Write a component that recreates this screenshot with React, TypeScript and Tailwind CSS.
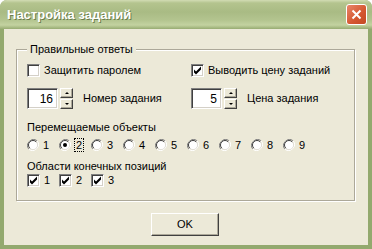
import React from "react";

const font = { fontFamily: '"Liberation Sans", Arial, sans-serif' };

function CheckBox({ checked }: { checked?: boolean }) {
  return (
    <span className="relative inline-block w-[13px] h-[13px] bg-white border border-t-[#808080] border-l-[#808080] border-b-white border-r-white shadow-[inset_1px_1px_0_#404040,inset_-1px_-1px_0_#d4d0c8] shrink-0">
      {checked && (
        <svg viewBox="0 0 11 11" className="absolute inset-0 w-[11px] h-[11px]">
          <path d="M2 4.5 L4 6.5 L9 1.5 L9 4.5 L4 9.5 L2 7.5 Z" fill="#000" />
        </svg>
      )}
    </span>
  );
}

function Radio({ checked }: { checked?: boolean }) {
  return (
    <svg viewBox="0 0 12 12" className="w-[12px] h-[12px] shrink-0">
      <path d="M10.2 1.8 A6 6 0 0 0 1.8 10.2" fill="none" stroke="#808080" strokeWidth="1" />
      <path d="M1.8 10.2 A6 6 0 0 0 10.2 1.8" fill="none" stroke="#ffffff" strokeWidth="1" />
      <circle cx="6" cy="6" r="4.6" fill="#ffffff" stroke="#d4d0c8" strokeWidth="0.6" />
      <path d="M9.2 2.8 A4.5 4.5 0 0 0 2.8 9.2" fill="none" stroke="#404040" strokeWidth="1" />
      {checked && <circle cx="6" cy="6" r="2" fill="#000" />}
    </svg>
  );
}

function Spinner({ value }: { value: string }) {
  return (
    <div className="flex items-center gap-[2px]">
      <div className="w-[31px] h-[21px] bg-white border border-t-[#808080] border-l-[#808080] border-b-white border-r-white shadow-[inset_1px_1px_0_#404040,inset_-1px_-1px_0_#d4d0c8] flex items-center justify-end pr-[4px] text-[12px] text-black">
        {value}
      </div>
      <div className="flex flex-col gap-[1px]">
        {["M2 5 L6 5 L4 3 Z", "M2 3 L6 3 L4 5 Z"].map((d) => (
          <div
            key={d}
            className="w-[13px] h-[10px] bg-[#ece9d8] border border-t-white border-l-white border-b-[#404040] border-r-[#404040] shadow-[inset_-1px_-1px_0_#aca899] flex items-center justify-center"
          >
            <svg viewBox="0 0 8 8" className="w-[8px] h-[8px]">
              <path d={d} fill="#000" />
            </svg>
          </div>
        ))}
      </div>
    </div>
  );
}

export default function App() {
  const radios = ["1", "2", "3", "4", "5", "6", "7", "8", "9"];

  return (
    <div className="w-[372px] h-[249px] flex flex-col bg-[#93a96e] rounded-t-[7px] overflow-hidden text-[11px] text-black" style={font}>
      {/* title bar */}
      <div className="h-[29px] flex items-center pl-[7px] pr-[5px] bg-[linear-gradient(#d2dcb4_0px,#b4c48e_3px,#a9bb84_12px,#b3c48f_20px,#c3d2a0_25px,#97ab72_29px)]">
        <span className="text-white font-bold text-[13px] [text-shadow:1px_1px_0_#6b7d4c] flex-1">
          Настройка заданий
        </span>
        <div className="w-[21px] h-[21px] rounded-[3px] border border-white bg-[linear-gradient(135deg,#e8866a,#d4562f_60%,#c44a25)] flex items-center justify-center">
          <svg viewBox="0 0 11 11" className="w-[11px] h-[11px]">
            <path d="M1.5 1.5 L9.5 9.5 M9.5 1.5 L1.5 9.5" stroke="#fff" strokeWidth="2" />
          </svg>
        </div>
      </div>

      {/* client */}
      <div className="flex-1 mx-[4px] mb-[4px] bg-[#ece9d8] flex flex-col pt-[20px] pl-[12px] pr-[13px]">
        <div className="relative h-[152px] border border-[#aca899] shadow-[1px_1px_0_#fff,inset_1px_1px_0_#fff] pl-[10px] pt-[14px]">
          <span className="absolute left-[10px] top-[-8px] bg-[#ece9d8] px-[3px] leading-[14px]">
            Правильные ответы
          </span>

          <div className="grid grid-cols-[164px_1fr]">
            <div className="flex items-center gap-[4px] h-[13px]">
              <CheckBox />
              <span>Защитить паролем</span>
            </div>
            <div className="flex items-center gap-[4px] h-[13px]">
              <CheckBox checked />
              <span>Выводить цену заданий</span>
            </div>
          </div>

          <div className="grid grid-cols-[164px_1fr] mt-[11px]">
            <div className="flex items-center gap-[10px] h-[21px]">
              <Spinner value="16" />
              <span>Номер задания</span>
            </div>
            <div className="flex items-center gap-[10px] h-[21px]">
              <Spinner value="5" />
              <span>Цена задания</span>
            </div>
          </div>

          <div className="mt-[11px] h-[14px] leading-[14px]">Перемещаемые объекты</div>

          <div className="flex mt-[4px] h-[13px]">
            {radios.map((r) => (
              <div key={r} className="w-[32px] flex items-center gap-[4px]">
                <Radio checked={r === "2"} />
                <span className={r === "2" ? "outline outline-1 outline-dotted outline-black leading-[12px] px-[1px]" : "leading-[12px]"}>
                  {r}
                </span>
              </div>
            ))}
          </div>

          <div className="mt-[8px] h-[14px] leading-[14px]">Области конечных позиций</div>

          <div className="flex mt-[1px] h-[13px]">
            {["1", "2", "3"].map((c) => (
              <div key={c} className="w-[32px] flex items-center gap-[4px]">
                <CheckBox checked />
                <span>{c}</span>
              </div>
            ))}
          </div>
        </div>

        <div className="flex justify-center mt-[12px] pr-[1px]">
          <button className="w-[68px] h-[23px] bg-[#ece9d8] border border-t-white border-l-white border-b-[#404040] border-r-[#404040] shadow-[inset_-1px_-1px_0_#aca899] text-[11px] text-black">
            OK
          </button>
        </div>
      </div>
    </div>
  );
}
